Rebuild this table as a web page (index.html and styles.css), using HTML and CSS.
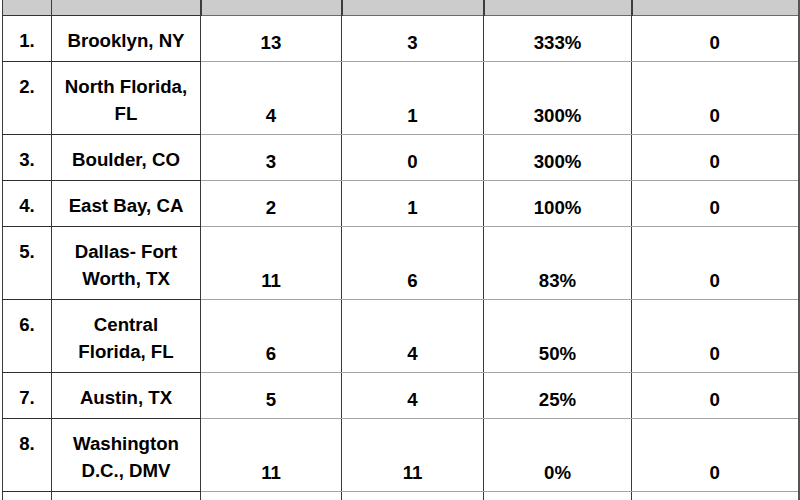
FILE: index.html
```html
<!DOCTYPE html>
<html lang="en">
<head>
<meta charset="utf-8">
<title>Rankings</title>
<link rel="stylesheet" href="styles.css">
</head>
<body>
<table class="rank-table">
  <colgroup>
    <col class="c-rank"><col class="c-city"><col class="c-a"><col class="c-b"><col class="c-c"><col class="c-d">
  </colgroup>
  <thead>
    <tr class="head"><th class="dark"></th><th class="dark"></th><th></th><th></th><th></th><th></th></tr>
  </thead>
  <tbody>
    <tr><td class="rank">1.</td><td class="city">Brooklyn, NY</td><td class="num">13</td><td class="num">3</td><td class="num">333%</td><td class="num">0</td></tr>
    <tr><td class="rank">2.</td><td class="city">North Florida, FL</td><td class="num">4</td><td class="num">1</td><td class="num">300%</td><td class="num">0</td></tr>
    <tr><td class="rank">3.</td><td class="city">Boulder, CO</td><td class="num">3</td><td class="num">0</td><td class="num">300%</td><td class="num">0</td></tr>
    <tr><td class="rank">4.</td><td class="city">East Bay, CA</td><td class="num">2</td><td class="num">1</td><td class="num">100%</td><td class="num">0</td></tr>
    <tr><td class="rank">5.</td><td class="city">Dallas- Fort Worth, TX</td><td class="num">11</td><td class="num">6</td><td class="num">83%</td><td class="num">0</td></tr>
    <tr><td class="rank">6.</td><td class="city">Central Florida, FL</td><td class="num">6</td><td class="num">4</td><td class="num">50%</td><td class="num">0</td></tr>
    <tr><td class="rank">7.</td><td class="city">Austin, TX</td><td class="num">5</td><td class="num">4</td><td class="num">25%</td><td class="num">0</td></tr>
    <tr><td class="rank">8.</td><td class="city">Washington D.C., DMV</td><td class="num">11</td><td class="num">11</td><td class="num">0%</td><td class="num">0</td></tr>
    <tr class="more"><td class="rank"></td><td class="city"></td><td class="num"></td><td class="num"></td><td class="num"></td><td class="num"></td></tr>
  </tbody>
</table>
</body>
</html>
```
FILE: styles.css
```css
html, body {
  margin: 0;
  padding: 0;
  background: #ffffff;
}
body {
  padding: 0 2px;
  font-family: "Liberation Sans", Arial, sans-serif;
  color: #000;
  overflow: hidden;
}
.rank-table {
  border-collapse: collapse;
  table-layout: fixed;
  width: 796px;
  font-size: 18.67px;
  font-weight: bold;
  line-height: 27px;
}
.c-rank { width: 49px; }
.c-city { width: 149px; }
.c-a { width: 141px; }
.c-b { width: 142px; }
.c-c { width: 148px; }
.c-d { width: 167px; }

.rank-table th {
  height: 15px;
  padding: 0;
  background: #cccccc;
  border-left: 2px solid #3c3c3c;
  border-right: 2px solid #3c3c3c;
  border-bottom: 1px solid #6a6a6a;
}
.rank-table th.dark { border-left-width: 1px; border-right-width: 1px; border-bottom-color: #333; }
.rank-table th:last-child { border-right: 2px solid #555; }

.rank-table td {
  text-align: center;
  border-left: 1px solid #3a3a3a;
  border-right: 1px solid #3a3a3a;
  border-bottom: 1px solid #a4a4a4;
}
.rank-table td.rank,
.rank-table td.city {
  vertical-align: top;
  padding: 11px 6px 7px;
  border-bottom: 1px solid #2e2e2e;
}
.rank-table td.rank { padding-left: 2px; padding-right: 2px; }
.rank-table td.num {
  vertical-align: bottom;
  padding: 13px 6px 5px;
}
.rank-table td:last-child { border-right: 2px solid #555; }
.rank-table tr.more td { height: 30px; padding: 0; }
```
